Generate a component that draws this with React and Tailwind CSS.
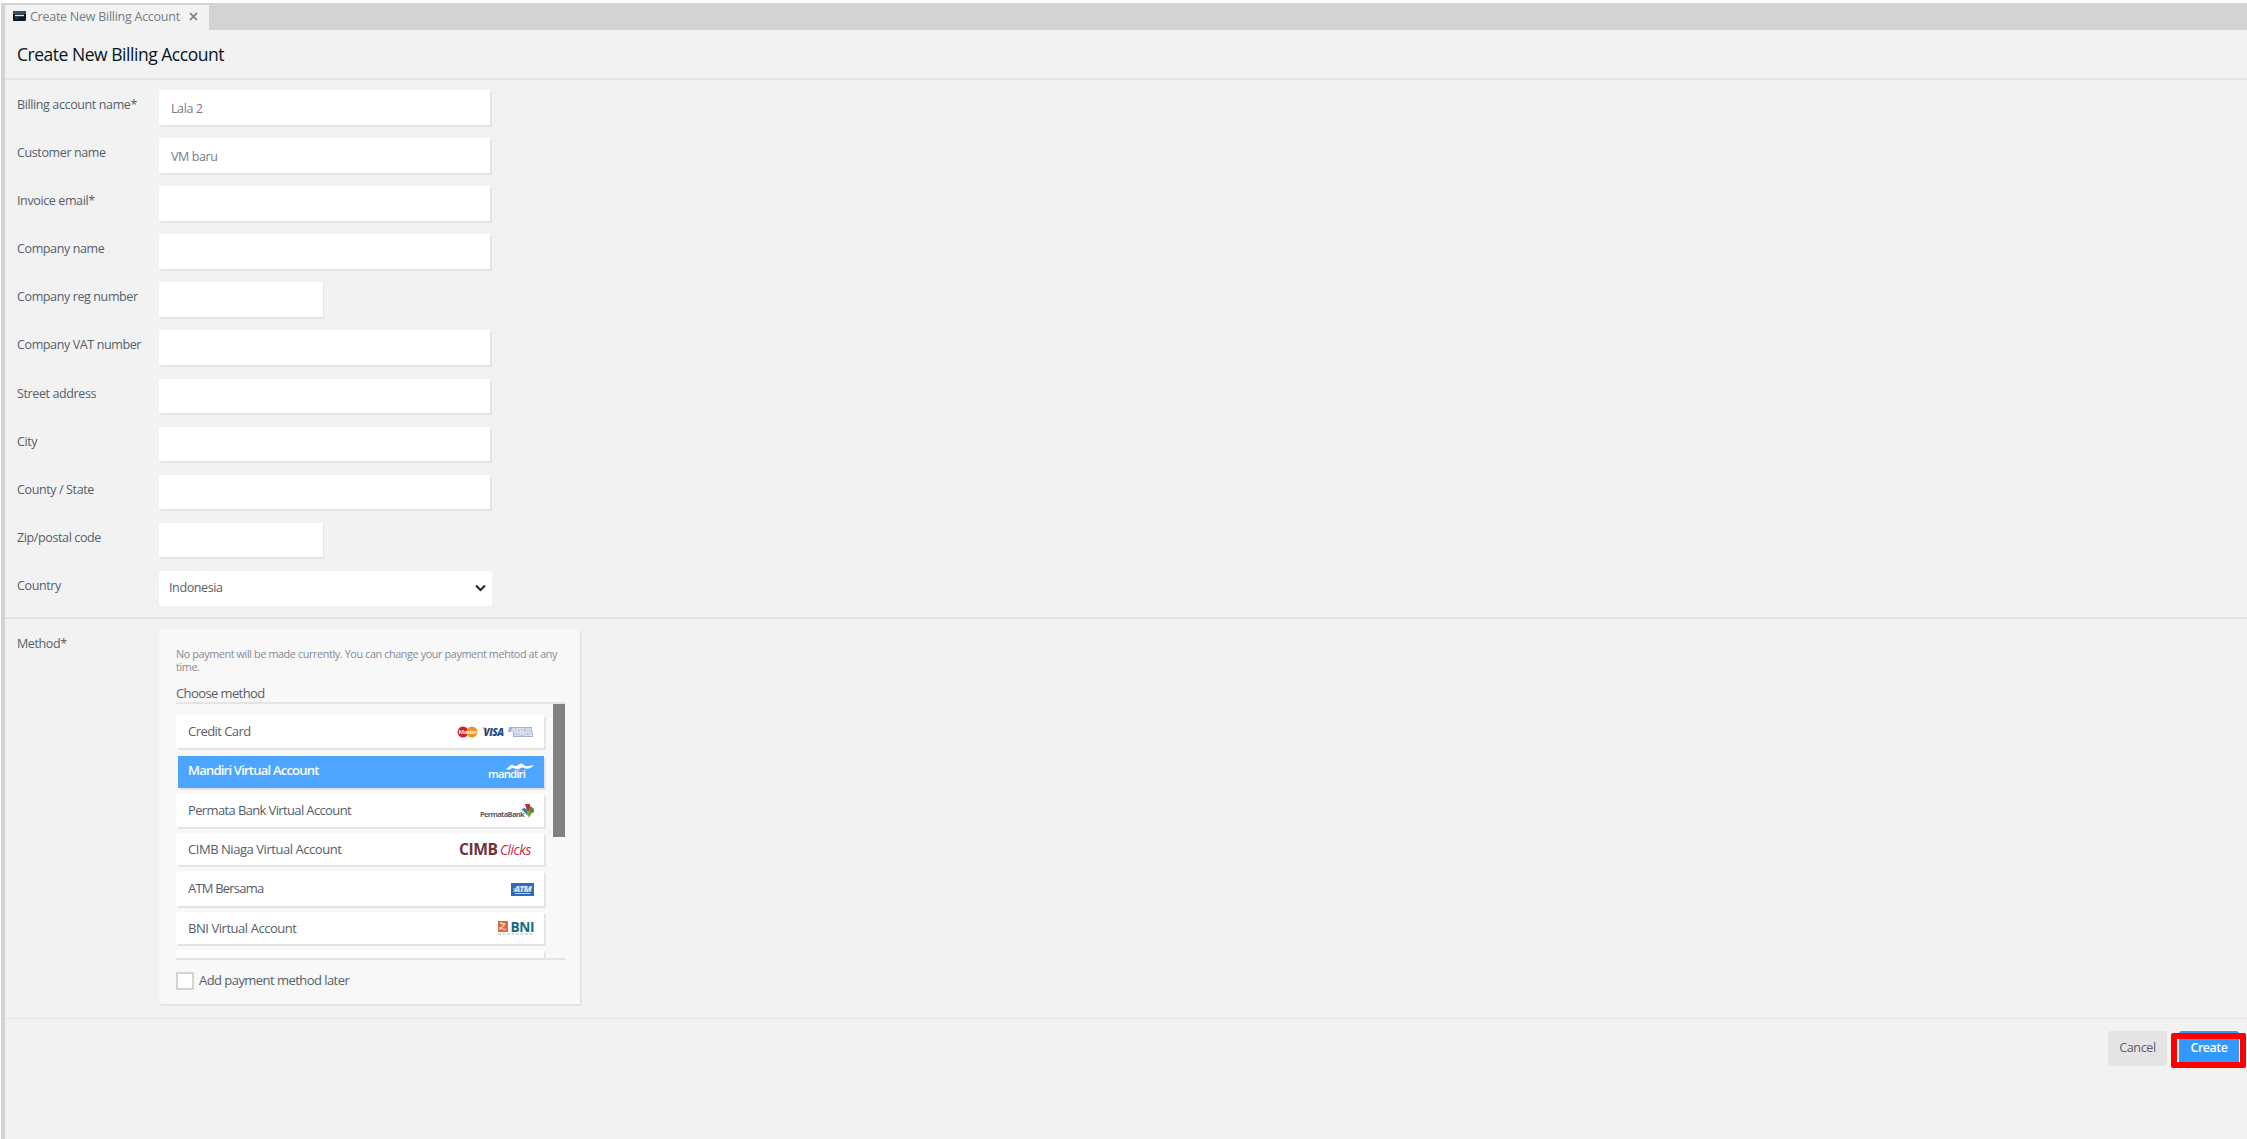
import React, { useState } from 'react'
import { clsx } from 'clsx'

const FIELDS = [
  { key: 'name', label: 'Billing account name*' },
  { key: 'customer', label: 'Customer name' },
  { key: 'email', label: 'Invoice email*' },
  { key: 'company', label: 'Company name' },
  { key: 'reg', label: 'Company reg number', short: true },
  { key: 'vat', label: 'Company VAT number' },
  { key: 'street', label: 'Street address' },
  { key: 'city', label: 'City' },
  { key: 'county', label: 'County / State' },
  { key: 'zip', label: 'Zip/postal code', short: true },
]

function CardLogos() {
  return (
    <svg width="77" height="12" viewBox="0 0 77 12" className="overflow-visible">
      <circle cx="6" cy="6" r="5.5" fill="#d2232a" />
      <circle cx="15" cy="6" r="5.5" fill="#e8962e" />
      <text x="1.5" y="8.3" fontSize="6" fontWeight="700" fontFamily="Open Sans" fill="#f7e6e0" textLength="18" lengthAdjust="spacingAndGlyphs">Master</text>
      <path d="M24.5 1.5h4l2 4z" fill="#f0a818" />
      <text x="26.5" y="10" fontSize="10.5" fontWeight="800" fontStyle="italic" fontFamily="Open Sans" fill="#1d4a8c" textLength="20" lengthAdjust="spacingAndGlyphs">VISA</text>
      <path d="M52 1h23v4.5h1V11H56V6h-5z" fill="#a3b0d0" />
      <text x="54" y="5.8" fontSize="5" fontWeight="700" fontFamily="Open Sans" fill="#eef1f8" textLength="20" lengthAdjust="spacingAndGlyphs">AMERICAN</text>
      <text x="57" y="10.4" fontSize="5" fontWeight="700" fontFamily="Open Sans" fill="#eef1f8" textLength="18" lengthAdjust="spacingAndGlyphs">EXPRESS</text>
    </svg>
  )
}

function MandiriLogo() {
  return (
    <svg width="46" height="16" viewBox="0 0 46 16" className="overflow-visible">
      <path d="M18 5c3-1 4-5 7-4 2 1 3 2 5 0s4-2 6 0 4 1 10 0c-2 3-7 5-10 3-2-1-3 0-5 1-3 1-4-1-6-1s-4 3-7 1z" fill="#fff" />
      <text x="0" y="14" fontSize="11" fontWeight="600" fontFamily="Open Sans" fill="#fff" textLength="37" lengthAdjust="spacingAndGlyphs">mandiri</text>
    </svg>
  )
}

function PermataLogo() {
  return (
    <svg width="54" height="14" viewBox="0 0 54 14" className="overflow-visible">
      <text x="0" y="12.5" fontSize="7" fontWeight="700" fontFamily="Open Sans" fill="#5c6064" textLength="44" lengthAdjust="spacingAndGlyphs">PermataBank</text>
      <path d="M45 0h5v7h-3z" fill="#c8283c" />
      <path d="M41.5 5l3.500-1 3 4-1 3z" fill="#2a7f92" />
      <path d="M50 1.5l4 3.500v3l-4 2-2-3z" fill="#5e8a3a" />
      <path d="M46 9l3-2 3 2-3 4.5z" fill="#78a83c" />
    </svg>
  )
}

function CimbLogo() {
  return (
    <svg width="74" height="14" viewBox="0 0 74 14" className="overflow-visible">
      <text x="-1" y="12.5" fontSize="15.5" fontWeight="700" fontFamily="Open Sans" fill="#70303f" textLength="38.5" lengthAdjust="spacingAndGlyphs">CIMB</text>
      <text x="40" y="12.5" fontSize="15" fontStyle="italic" fontWeight="500" fontFamily="Open Sans" fill="#d0283a" textLength="31" lengthAdjust="spacingAndGlyphs">Clicks</text>
    </svg>
  )
}

function AtmLogo() {
  return (
    <svg width="23" height="13" viewBox="0 0 23 13" className="mt-0.5 overflow-visible">
      <path d="M0 0h23v13H0z" fill="#2f6cb3" />
      <text x="3" y="8.5" fontSize="8" fontWeight="800" fontStyle="italic" fontFamily="Open Sans" fill="#d5e2f1" textLength="17" lengthAdjust="spacingAndGlyphs">ATM</text>
      <path d="M2 6h5M4 10.5h15" stroke="#b4cbe6" strokeWidth="1" />
    </svg>
  )
}

function BniLogo() {
  return (
    <svg width="36" height="14" viewBox="0 0 36 14" className="overflow-visible">
      <path d="M0 0h10v11H0z" fill="#e5673a" />
      <path d="M2 2l5 1M7 3l-4 4 5 2M2 6v3" stroke="#f6d9cd" strokeWidth="1.3" fill="none" />
      <text x="12.5" y="10.5" fontSize="14.5" fontWeight="700" fontFamily="Open Sans" fill="#136b80" textLength="23.5" lengthAdjust="spacingAndGlyphs">BNI</text>
      <path d="M0 13h36" stroke="#a9bcc0" strokeWidth="1.2" strokeDasharray="3 1.5" />
    </svg>
  )
}

const METHODS = [
  { id: 'cc', label: 'Credit Card', logo: CardLogos, size: 'h-[33px] mb-2', text: 'tracking-[-0.55px]' },
  { id: 'mandiri', label: 'Mandiri Virtual Account', logo: MandiriLogo, size: 'h-8 mb-1.5', text: 'tracking-[-0.78px]' },
  { id: 'permata', label: 'Permata Bank Virtual Account', logo: PermataLogo, size: 'h-[33px] mb-1.5', text: 'tracking-[-0.63px]' },
  { id: 'cimb', label: 'CIMB Niaga Virtual Account', logo: CimbLogo, size: 'h-8 mb-1.5', text: 'tracking-[-0.45px]' },
  { id: 'atm', label: 'ATM Bersama', logo: AtmLogo, size: 'h-[35px] mb-1.5', text: 'tracking-[-0.8px]' },
  { id: 'bni', label: 'BNI Virtual Account', logo: BniLogo, size: 'h-8 mb-1.5', text: 'tracking-[-0.45px]' },
]

export default function App() {
  const [form, setForm] = useState({ name: 'Lala 2', customer: 'VM baru' })
  const [method, setMethod] = useState('mandiri')
  const [later, setLater] = useState(false)

  return (
    <div className="h-[1139px] w-[2247px] overflow-hidden bg-white pt-[3px] pl-px font-['Open_Sans',sans-serif] text-[12.5px] tracking-[-0.38px] text-[#55606a]">
      <div className="flex h-full flex-col border-l-4 border-[#d3d3d3] bg-[#f2f2f2]">
        {/* Tabs */}
        <div className="flex h-[27px] shrink-0 bg-[#d3d3d3] pt-0.5">
          <div className="flex w-[204px] items-center bg-[#f2f2f2] pl-2">
            <svg width="13" height="10" viewBox="0 0 13 10" className="-mt-1">
              <rect width="13" height="10" rx="1" fill="#071a26" />
              <path d="M0 0h13v3H0z" fill="#3d4c57" />
              <path d="M2 4.5h9" stroke="#e6e9eb" strokeWidth="1.4" />
              <path d="M2 7h3" stroke="#4d5a64" strokeWidth="1" />
            </svg>
            <span className="-mt-px ml-1 w-[159px] whitespace-nowrap tracking-[-0.26px] text-[#747d85]">Create New Billing Account</span>
            <svg width="9" height="9" viewBox="0 0 9 9" className="-mt-0.5">
              <path d="M1 1l7 7M8 1l-7 7" stroke="#777" strokeWidth="1.6" />
            </svg>
          </div>
        </div>

        <h1 className="flex h-[50px] shrink-0 items-center border-b-2 border-[#e4e4e4] pl-3 text-[17.5px] tracking-[-0.47px] text-[#06141f]">
          Create New Billing Account
        </h1>

        {/* Account details */}
        <div className="h-[539px] shrink-0 border-b-2 border-[#e4e4e4] pt-2.5 pl-3">
          {FIELDS.map(f => (
            <div key={f.key} className="flex h-[48.1px]">
              <label className="w-[142px] pt-1.5 leading-[18px]">{f.label}</label>
              <input
                value={form[f.key] || ''}
                onChange={e => setForm({ ...form, [f.key]: e.target.value })}
                className={clsx(
                  'h-[34.5px] bg-white pt-0.5 pl-3 tracking-[-0.4px] text-[#747d85] outline-none',
                  f.short ? 'w-[164px] shadow-[1px_2px_0_#e4e4e4]' : 'w-[331px] shadow-[2px_2px_0_#e4e4e4]'
                )}
              />
            </div>
          ))}
          <div className="flex">
            <label className="w-[142px] pt-1.5 leading-[18px]">Country</label>
            <button className="flex h-[35px] w-[333px] items-center justify-between rounded-[3px] bg-white pr-1.5 pl-2.5">
              <span>Indonesia</span>
              <svg width="11" height="8" viewBox="0 0 11 8">
                <path d="M1 1.5l4.5 4.5L10 1.5" stroke="#222" strokeWidth="2" fill="none" />
              </svg>
            </button>
          </div>
        </div>

        {/* Payment method */}
        <div className="flex h-[400px] shrink-0 border-b border-[#e4e4e4] pt-2.5 pl-3">
          <label className="w-[142px] pt-1.5 leading-[18px]">Method*</label>
          <div className="h-[375px] w-[421px] bg-[#f8f8f8] pl-[17px] shadow-[2px_2px_0_#e4e4e4]">
            <p className="pt-[18px] text-[10.8px] leading-[13px] tracking-[-0.38px] whitespace-nowrap text-[#858a93]">
              No payment will be made currently. You can change your payment mehtod at any<br />time.
            </p>
            <h2 className="mt-[11px] h-[18px] text-[13px] leading-[18px] tracking-[-0.6px]">Choose method</h2>
            <div className="flex h-[258px] w-[389px] justify-between overflow-hidden border-y-2 border-[#e4e4e4]">
              <div className="w-[370px] pt-[11px]">
                {METHODS.map(m => {
                  const Logo = m.logo
                  const active = m.id === method
                  return (
                    <div
                      key={m.id}
                      onClick={() => setMethod(m.id)}
                      className={clsx(
                        'flex items-center justify-between pr-2.5 text-[13px] shadow-[2px_2px_0_#e4e4e4]',
                        m.size, m.text,
                        active ? 'ml-0.5 w-[366px] bg-[#4ca5ff] pl-2.5 font-semibold text-white' : 'w-[368px] bg-white pl-3'
                      )}
                    >
                      <span className={active ? 'pb-0.5' : 'pt-px'}>{m.label}</span>
                      <Logo />
                    </div>
                  )
                })}
                <div className="h-8 w-[368px] bg-white shadow-[2px_2px_0_#e4e4e4]" />
              </div>
              <div className="h-[133px] w-3 bg-[#808080]" />
            </div>
            <div className="mt-[11px] flex items-center gap-[5px]" onClick={() => setLater(!later)}>
              <span className="flex size-[18px] items-center justify-center border-2 border-[#d3d3d3] bg-white">
                {later && <span className="size-2 bg-[#3399ff]" />}
              </span>
              <span className="text-[13px] tracking-[-0.55px]">Add payment method later</span>
            </div>
          </div>
        </div>

        <div className="flex justify-end gap-3 pt-3 pr-2">
          <button className="h-[35px] w-[59px] rounded-[3px] bg-[#e4e4e4] pb-px">Cancel</button>
          <div className="relative">
            <button className="h-[35px] w-[60px] rounded-[3px] bg-[#3399ff] pb-px font-semibold tracking-[-0.5px] text-white">Create</button>
            <div className="absolute top-0.5 -left-2 h-[35px] w-[75px] rounded-[2px] border-6 border-[#ff0000]" />
          </div>
        </div>
      </div>
    </div>
  )
}
